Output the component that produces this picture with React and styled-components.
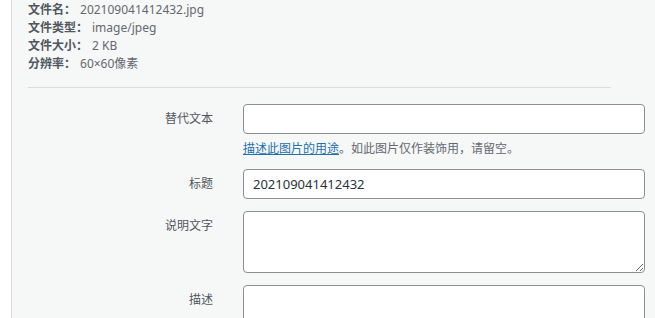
import React from "react";
import styled, { createGlobalStyle } from "styled-components";

const GlobalStyle = createGlobalStyle`
  html, body {
    margin: 0;
    padding: 0;
    background: #fff;
  }
  body {
    font-family: "Noto Sans", "Noto Sans CJK SC", sans-serif;
    font-size: 12px;
    color: #646970;
  }
`;

const Page = styled.div`
  display: flex;
  height: 100vh;
  padding-left: 11px;
  overflow: hidden;
`;

const Panel = styled.div`
  flex: 1;
  background: #f6f7f7;
  border-left: 1px solid #dcdcde;
  padding: 1px 10px 0 16px;
  overflow: hidden;
`;

const Meta = styled.div`
  line-height: 18px;
`;

const MetaRow = styled.div`
  white-space: nowrap;
  color: #646970;
`;

const MetaLabel = styled.strong`
  font-weight: 700;
  color: #50575e;
  margin-right: 4px;
`;

const Divider = styled.hr`
  width: 583px;
  height: 1px;
  border: 0;
  background: #dcdcde;
  margin: 14px 0 0;
`;

const Form = styled.div`
  display: flex;
  flex-direction: column;
  gap: 12px;
  margin-top: 16px;
`;

const Setting = styled.div`
  display: grid;
  grid-template-columns: 185px 402px;
  column-gap: 30px;
  align-items: start;
`;

const Label = styled.label`
  text-align: right;
  line-height: 30px;
  color: #50575e;
`;

const Field = styled.div`
  display: flex;
  flex-direction: column;
`;

const Input = styled.input`
  box-sizing: border-box;
  width: 100%;
  height: 30px;
  padding: 0 9px;
  border: 1px solid #8c8f94;
  border-radius: 4px;
  background: #fff;
  font-family: "Noto Sans", "Noto Sans CJK SC", sans-serif;
  font-size: 13px;
  color: #2c3338;
  outline: none;
`;

const TextArea = styled.textarea`
  box-sizing: border-box;
  width: 100%;
  height: ${(p) => p.rows * 20 + 2}px;
  display: block;
  padding: 4px 9px;
  border: 1px solid #8c8f94;
  border-radius: 4px;
  background: #fff;
  font-family: "Noto Sans", "Noto Sans CJK SC", sans-serif;
  font-size: 13px;
  color: #2c3338;
  resize: vertical;
  outline: none;
`;

const Help = styled.p`
  margin: 6px 0 0;
  line-height: 17px;
  color: #646970;
  white-space: nowrap;
`;

const HelpLink = styled.a`
  color: #2271b1;
  text-decoration: underline;
`;

const meta = [
  ["文件名：", "202109041412432.jpg"],
  ["文件类型：", "image/jpeg"],
  ["文件大小：", "2 KB"],
  ["分辨率：", "60×60像素"],
];

export default function App() {
  return (
    <>
      <GlobalStyle />
      <Page>
        <Panel>
          <Meta>
            {meta.map(([label, value]) => (
              <MetaRow key={label}>
                <MetaLabel>{label}</MetaLabel>
                {value}
              </MetaRow>
            ))}
          </Meta>
          <Divider />
          <Form>
            <Setting>
              <Label>替代文本</Label>
              <Field>
                <Input type="text" defaultValue="" />
                <Help>
                  <HelpLink href="#">描述此图片的用途</HelpLink>
                  。如此图片仅作装饰用，请留空。
                </Help>
              </Field>
            </Setting>
            <Setting>
              <Label>标题</Label>
              <Field>
                <Input type="text" defaultValue="202109041412432" />
              </Field>
            </Setting>
            <Setting>
              <Label>说明文字</Label>
              <Field>
                <TextArea rows={3} defaultValue="" />
              </Field>
            </Setting>
            <Setting>
              <Label>描述</Label>
              <Field>
                <TextArea rows={3} defaultValue="" />
              </Field>
            </Setting>
          </Form>
        </Panel>
      </Page>
    </>
  );
}
